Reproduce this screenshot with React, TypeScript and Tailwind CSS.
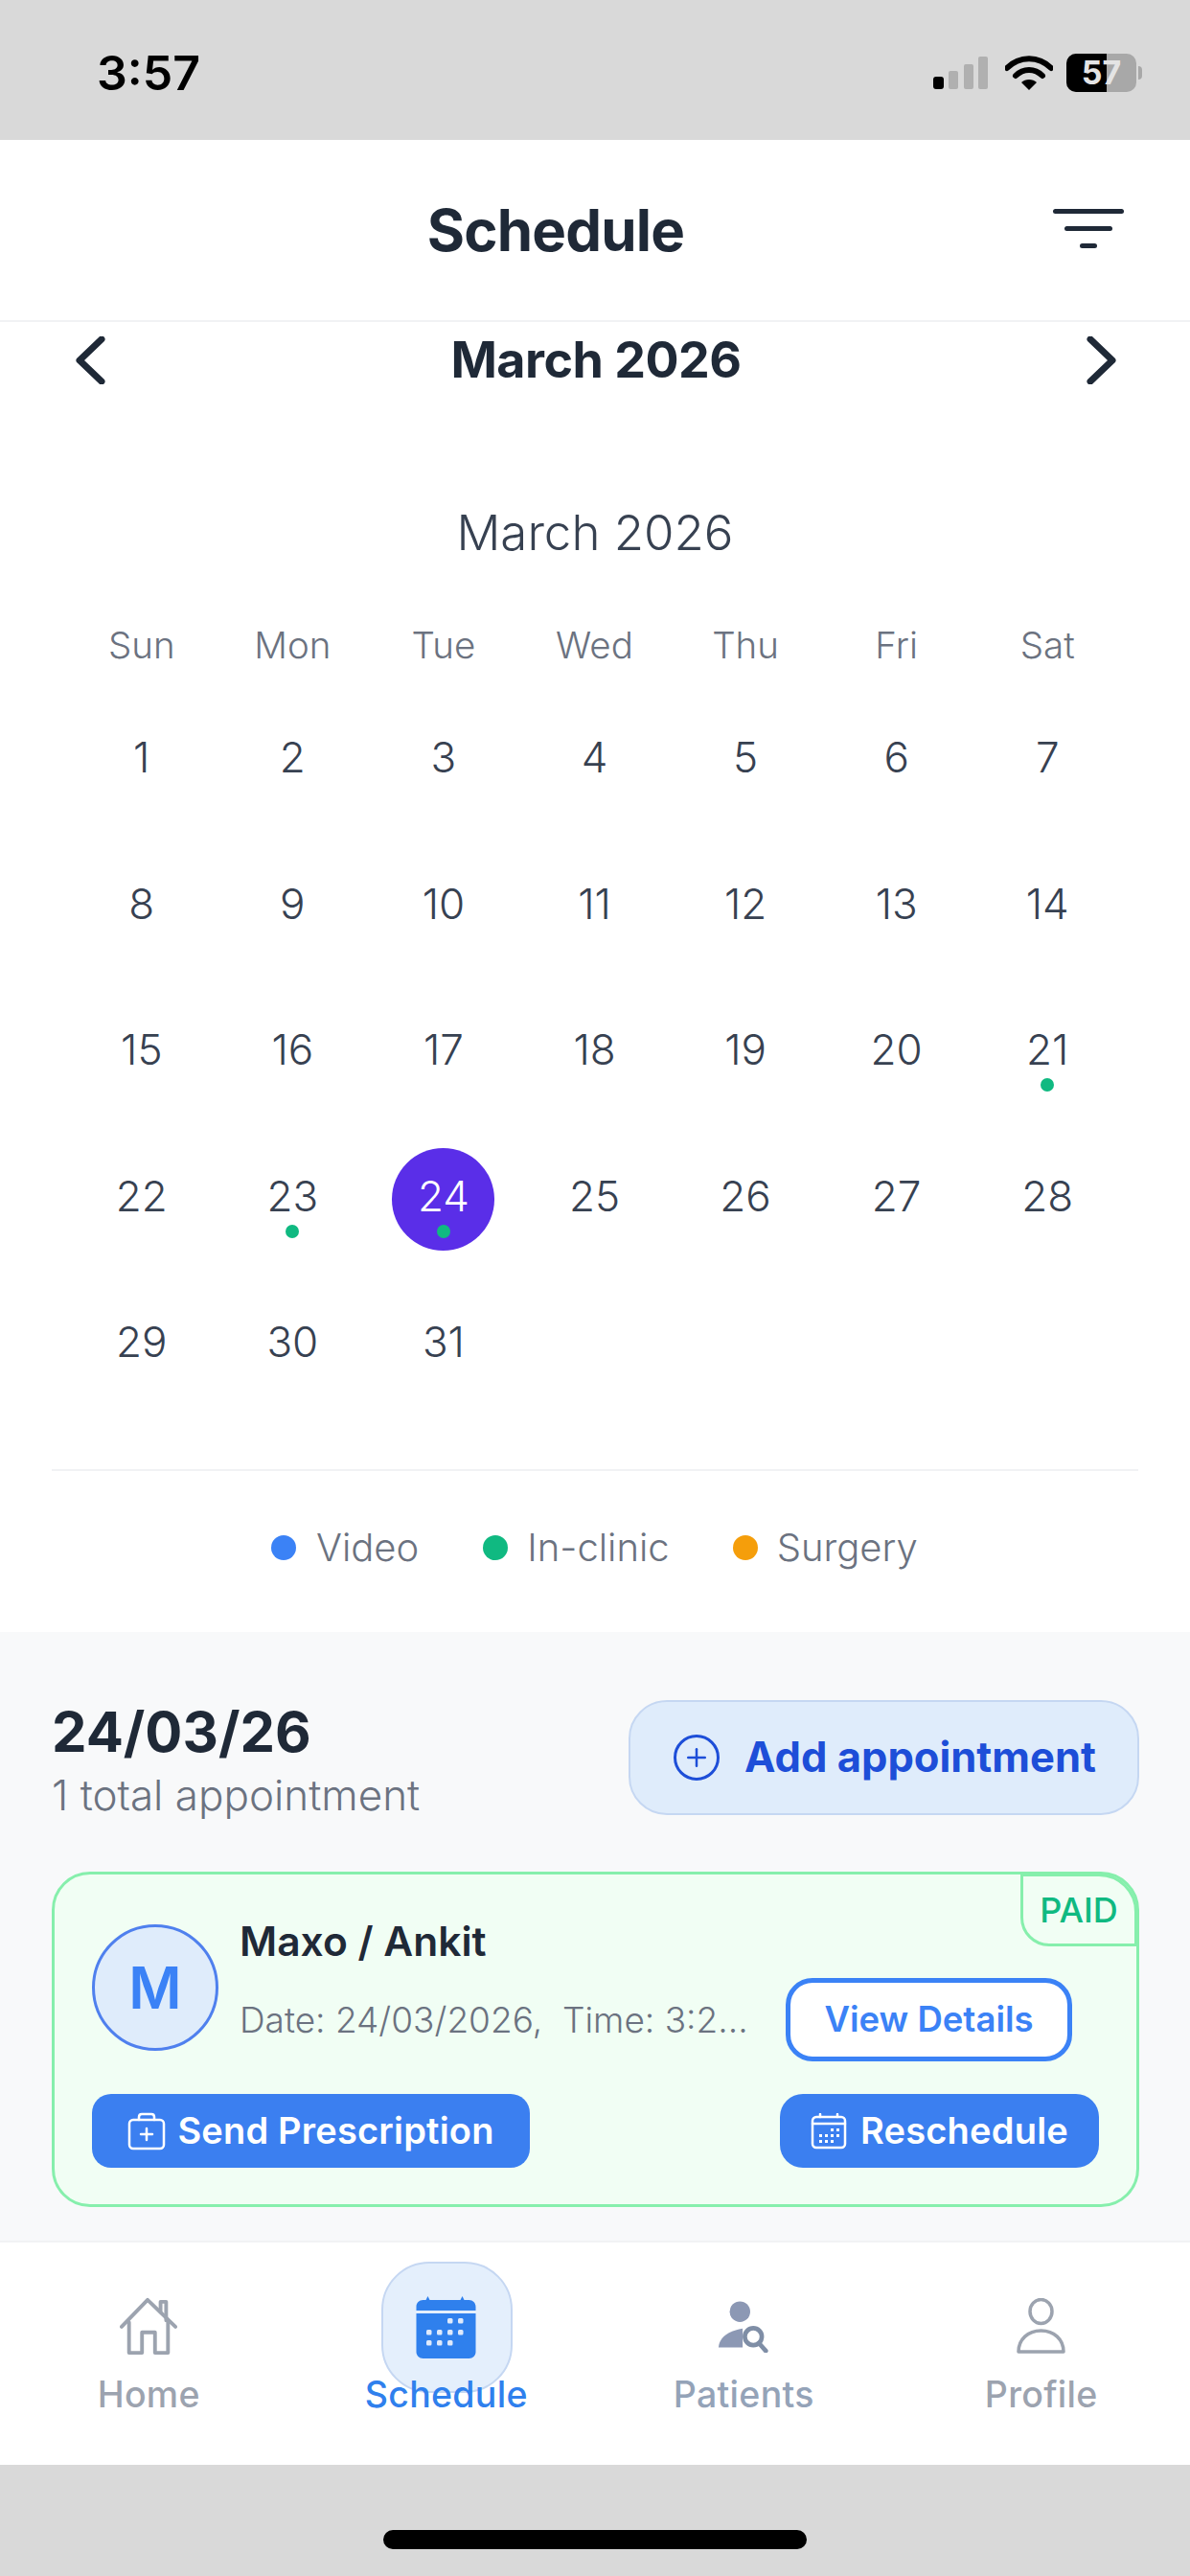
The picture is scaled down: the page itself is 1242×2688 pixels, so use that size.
import { Plus } from 'lucide-react';

const weekDays = ['Sun', 'Mon', 'Tue', 'Wed', 'Thu', 'Fri', 'Sat'];
const days = Array.from({ length: 31 }, (_, i) => i + 1);
const dotDays = [21, 23, 24];
const selectedDay = 24;

function StatusIcons() {
  return (
    <div className="flex items-center">
      <svg width="58" height="36" viewBox="0 0 58 36" className="mr-[17px]">
        <rect x="0" y="22" width="11" height="13" rx="3" fill="#000" />
        <rect x="16" y="16" width="10" height="19" rx="2" fill="#b0b0b0" />
        <rect x="32" y="9" width="10" height="26" rx="2" fill="#b0b0b0" />
        <rect x="47" y="1" width="10" height="34" rx="2" fill="#b0b0b0" />
      </svg>
      <svg width="50" height="38" viewBox="0 0 50 38" className="mr-[14px]">
        <path d="M2 14 C15 1 35 1 48 14" fill="none" stroke="#000" strokeWidth="6" strokeLinecap="round" />
        <path d="M11 22 C19 14 31 14 39 22" fill="none" stroke="#000" strokeWidth="6" strokeLinecap="round" />
        <path d="M25 37 L17 29 C21 25 29 25 33 29 Z" fill="#000" />
      </svg>
      <div className="relative flex h-[40px] w-[73px] overflow-hidden rounded-[10px] bg-[#a8a8a8]">
        <div className="h-full w-[42px] bg-black" />
        <span className="absolute inset-0 flex items-center justify-center text-[34px] leading-none font-bold text-[#e4e4e4]">57</span>
      </div>
      <div className="ml-[2px] h-[14px] w-[4px] rounded-r-full bg-[#a8a8a8]" />
    </div>
  );
}

function HomeIcon() {
  return (
    <svg width="60" height="60" viewBox="0 0 62 62" fill="none" stroke="#9ca3af" strokeWidth="4" strokeLinejoin="round" strokeLinecap="round">
      <path d="M2 32 L30 3 L60 32" />
      <path d="M44 16 V5 H50 V25" />
      <path d="M10 27 V60 H24 V38 H38 V60 H52 V27" />
    </svg>
  );
}

function CalendarFilledIcon() {
  const dots = [
    [36, 24],
    [47, 24],
    [14, 36],
    [25, 36],
    [36, 36],
    [47, 36],
    [14, 47],
    [25, 47],
    [36, 47],
  ];
  return (
    <svg width="65" height="66" viewBox="0 0 64 66">
      <path d="M13 0 L15 4 H47 L49 0 L51 4 H56 C60 4 63 7 63 11 V15 H1 V11 C1 7 4 4 8 4 H11 Z" fill="#2f80ed" />
      <path d="M1 18 H63 V58 C63 62 60 65 56 65 H8 C4 65 1 62 1 58 Z" fill="#2f80ed" />
      {dots.map(([x, y]) => (
        <rect key={`${x}-${y}`} x={x - 2.5} y={y - 1} width="5.5" height="5.5" rx="1.5" fill="#dfeafc" />
      ))}
    </svg>
  );
}

function PatientsIcon() {
  return (
    <svg width="54" height="54" viewBox="0 0 58 58">
      <circle cx="25" cy="12" r="11.5" fill="#8c98b4" />
      <path d="M1 52 C2 42 10 34 28 31 V52 Z" fill="#8c98b4" />
      <circle cx="40" cy="40" r="9.5" fill="none" stroke="#7f8ea6" strokeWidth="5" />
      <path d="M47 48 L54 56" stroke="#7f8ea6" strokeWidth="5" strokeLinecap="round" />
    </svg>
  );
}

function ProfileIcon() {
  return (
    <svg width="53" height="59" viewBox="0 0 53 59" fill="none" stroke="#9ca3af" strokeWidth="3.5" strokeLinejoin="round">
      <ellipse cx="26.5" cy="14" rx="11.5" ry="12.5" />
      <path d="M3 56 C3 43 13 34 26.5 34 C40 34 50 43 50 56 Z" />
    </svg>
  );
}

function KitIcon() {
  return (
    <svg width="40" height="40" viewBox="0 0 40 40" fill="none" stroke="#fff" strokeWidth="2.5" strokeLinejoin="round" strokeLinecap="round">
      <rect x="2" y="8" width="36" height="30" rx="4" />
      <path d="M12 8 V5 C12 3 13 2 15 2 H25 C27 2 28 3 28 5 V8" />
      <path d="M20 17 V29 M14 23 H26" />
    </svg>
  );
}

function SmallCalendarIcon() {
  const dots = [
    [22, 17],
    [28, 17],
    [10, 23],
    [16, 23],
    [22, 23],
    [28, 23],
    [10, 29],
    [16, 29],
    [22, 29],
  ];
  return (
    <svg width="38" height="38" viewBox="0 0 38 38" fill="none" stroke="#fff" strokeWidth="2.5" strokeLinecap="round">
      <rect x="2" y="4" width="34" height="32" rx="4" />
      <path d="M2 11 H36 M10 1 V4 M28 1 V4" />
      {dots.map(([x, y]) => (
        <rect key={`${x}-${y}`} x={x - 1} y={y - 1} width="3" height="3" fill="#fff" stroke="none" />
      ))}
    </svg>
  );
}

export default function App() {
  return (
    <div className="flex h-[2688px] w-[1242px] flex-col overflow-hidden bg-white font-['Inter',sans-serif]">
      {/* Status bar */}
      <div className="flex h-[146px] shrink-0 items-center justify-between bg-[#d9d9d9] pt-[6px] pr-[50px] pl-[101px]">
        <span className="text-[50px] leading-none font-semibold text-black">3:57</span>
        <StatusIcons />
      </div>

      {/* Header */}
      <header className="relative flex h-[190px] shrink-0 items-center justify-center border-b-2 border-[#f1f2f4]">
        <h1 className="mr-[82px] text-[60px] leading-none font-bold tracking-[-0.8px] text-[#1f2937]">Schedule</h1>
        <div className="absolute top-[72px] right-[69px] flex w-[74px] flex-col items-center gap-[13px]">
          <div className="h-[5px] w-[74px] rounded-full bg-[#1f2937]" />
          <div className="h-[5px] w-[50px] rounded-full bg-[#1f2937]" />
          <div className="h-[5px] w-[18px] rounded-full bg-[#1f2937]" />
        </div>
      </header>

      {/* Month switcher */}
      <div className="flex h-[79px] shrink-0 items-center justify-between pr-[76px] pl-[78px]">
        <svg width="32" height="50" viewBox="0 0 32 50" fill="none" stroke="#1f2937" strokeWidth="7" strokeLinecap="round" strokeLinejoin="round">
          <path d="M28 3 L5 25 L28 47" />
        </svg>
        <span className="text-[52px] leading-none font-bold tracking-[-0.5px] text-[#1f2937]">March 2026</span>
        <svg width="32" height="50" viewBox="0 0 32 50" fill="none" stroke="#1f2937" strokeWidth="7" strokeLinecap="round" strokeLinejoin="round">
          <path d="M4 3 L27 25 L4 47" />
        </svg>
      </div>

      {/* Calendar */}
      <div className="flex h-[1288px] shrink-0 flex-col bg-white">
        <div className="mt-[106px] flex h-[70px] items-center justify-center text-[51px] font-light text-[#374151]">March 2026</div>
        <div className="mt-[42px] grid grid-cols-7 pr-[70px] pl-[69px]">
          {weekDays.map((d) => (
            <div key={d} className="flex h-[81px] items-center justify-center text-[38.5px] font-light text-[#6b7280]">
              {d}
            </div>
          ))}
          {days.map((day) => (
            <div key={day} className="relative flex h-[152.5px] items-center justify-center">
              {day === selectedDay && <div className="absolute top-[26px] left-[25px] h-[107px] w-[107px] rounded-full bg-[#5a2ee8]" />}
              <span className={`relative text-[44px] leading-none font-light ${day === selectedDay ? 'text-white' : 'text-[#374151]'}`}>{day}</span>
              {dotDays.includes(day) && <div className="absolute top-[106px] left-1/2 h-[14px] w-[14px] -translate-x-1/2 rounded-full bg-[#10b981]" />}
            </div>
          ))}
        </div>
        <div className="mt-[56px] mr-[54px] ml-[54px] h-[2px] bg-[#f1f2f4]" />
        <div className="mt-[58px] flex items-center pl-[283px] text-[40px] leading-[44px] font-light text-[#6b7280]">
          <div className="h-[26px] w-[26px] rounded-full bg-[#3b82f6]" />
          <span className="ml-[21px]">Video</span>
          <div className="ml-[67px] h-[26px] w-[26px] rounded-full bg-[#10b981]" />
          <span className="ml-[20px]">In-clinic</span>
          <div className="ml-[66px] h-[26px] w-[26px] rounded-full bg-[#f59e0b]" />
          <span className="ml-[20px]">Surgery</span>
        </div>
      </div>

      {/* Appointments */}
      <div className="flex h-[635px] shrink-0 flex-col bg-[#f8f9fa] pt-[71px] pr-[53px] pl-[54px]">
        <div className="flex h-[120px] items-center justify-between">
          <div className="flex flex-col pt-[3px]">
            <span className="text-[58px] leading-[70px] font-bold text-[#1f2937]">24/03/26</span>
            <span className="mt-[5px] text-[44px] leading-[52px] font-light text-[#6b7280]">1 total appointment</span>
          </div>
          <button className="flex h-[120px] w-[533px] items-center justify-center gap-[26px] rounded-[40px] border-2 border-[#c5d7f2] bg-[#dfecfb] pl-[2px] text-[43.5px] font-bold text-[#1d4ed8]">
            <span className="flex h-[48px] w-[48px] items-center justify-center rounded-full border-[3px] border-[#1d4ed8]">
              <Plus size={30} strokeWidth={2} />
            </span>
            Add appointment
          </button>
        </div>

        {/* Card */}
        <div className="relative mt-[59px] h-[350px] rounded-[40px] border-[3px] border-[#86efac] bg-[#f1fef4] px-[39px] pt-[52px]">
          <div className="absolute -top-[1px] -right-[1px] flex h-[76px] w-[122px] items-center justify-center rounded-tr-[40px] rounded-bl-[30px] border-[3px] border-[#86efac] bg-[#f1fef4] text-[36px] font-medium text-[#10b981]">
            PAID
          </div>
          <div className="flex">
            <div className="flex h-[132px] w-[132px] shrink-0 items-center justify-center rounded-full border-[3px] border-[#4f80ee] bg-[#dfecfb] text-[60px] font-semibold text-[#3b82f6]">
              M
            </div>
            <div className="-mt-[7px] ml-[22px] flex flex-col">
              <span className="text-[42.5px] leading-[50px] font-semibold text-[#1f2937]">Maxo / Ankit</span>
              <div className="mt-[13px] flex items-center">
                <span className="w-[530px] text-[37px] font-light whitespace-pre text-[#6b7280]">{'Date: 24/03/2026,  Time: 3:2...'}</span>
                <button className="ml-[40px] h-[87px] w-[299px] rounded-[28px] border-[5px] border-[#3b82f6] bg-white text-[36.5px] font-semibold text-[#3b82f6]">
                  View Details
                </button>
              </div>
            </div>
          </div>
          <div className="mt-[34px] flex items-center justify-between">
            <button className="flex h-[77px] w-[457px] items-center justify-center gap-[12px] rounded-[20px] bg-[#3b7ff0] text-[38px] font-semibold tracking-[0.2px] text-white">
              <KitIcon />
              Send Prescription
            </button>
            <button className="flex h-[77px] w-[333px] items-center justify-center gap-[14px] rounded-[24px] bg-[#3b7ff0] text-[38px] font-semibold tracking-[0.2px] text-white">
              <SmallCalendarIcon />
              Reschedule
            </button>
          </div>
        </div>
      </div>

      {/* Bottom nav */}
      <nav className="grid h-[234px] shrink-0 grid-cols-4 border-t-2 border-[#f1f2f4] bg-white text-[37.5px] leading-[40px] font-medium tracking-[0.3px]">
        <div className="flex flex-col items-center">
          <div className="flex h-[139px] items-end pb-[22px]">
            <HomeIcon />
          </div>
          <span className="text-[#9ca3af]">Home</span>
        </div>
        <div className="flex flex-col items-center">
          <div className="relative flex h-[139px] w-full items-end justify-center pb-[17px]">
            <div className="absolute top-[20px] left-[87px] h-[137px] w-[137px] rounded-[50px] border-2 border-[#c5d7f2] bg-[#e4effc]" />
            <div className="relative">
              <CalendarFilledIcon />
            </div>
          </div>
          <span className="relative text-[#2f80ed]">Schedule</span>
        </div>
        <div className="flex flex-col items-center">
          <div className="flex h-[139px] items-end pb-[24px]">
            <PatientsIcon />
          </div>
          <span className="text-[#94a3b8]">Patients</span>
        </div>
        <div className="flex flex-col items-center">
          <div className="flex h-[139px] items-end pb-[22px]">
            <ProfileIcon />
          </div>
          <span className="text-[#9ca3af]">Profile</span>
        </div>
      </nav>

      {/* Home indicator */}
      <div className="flex flex-1 justify-center bg-[#d9d9d9] pt-[68px]">
        <div className="h-[20px] w-[442px] rounded-full bg-black" />
      </div>
    </div>
  );
}
